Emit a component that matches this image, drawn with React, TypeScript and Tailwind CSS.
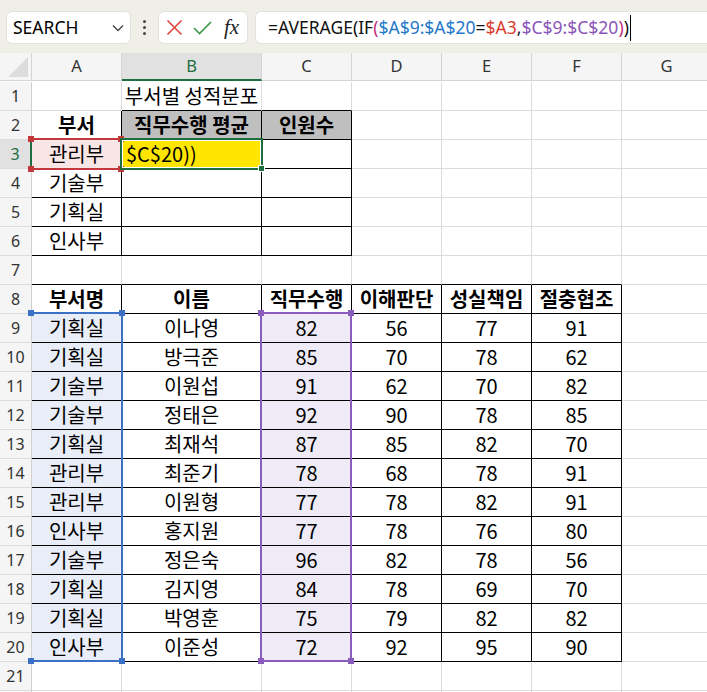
import React from 'react';

const CELL_FONT = { fontFamily: '"Noto Sans CJK KR", "Noto Sans", sans-serif' };
const UI_FONT = { fontFamily: '"Noto Sans", "Noto Sans CJK KR", sans-serif' };

const colLetters = ['A', 'B', 'C', 'D', 'E', 'F', 'G'];

const lower: string[][] = [
  ['기획실', '이나영', '82', '56', '77', '91'],
  ['기획실', '방극준', '85', '70', '78', '62'],
  ['기술부', '이원섭', '91', '62', '70', '82'],
  ['기술부', '정태은', '92', '90', '78', '85'],
  ['기획실', '최재석', '87', '85', '82', '70'],
  ['관리부', '최준기', '78', '68', '78', '91'],
  ['관리부', '이원형', '77', '78', '82', '91'],
  ['인사부', '홍지원', '77', '78', '76', '80'],
  ['기술부', '정은숙', '96', '82', '78', '56'],
  ['기획실', '김지영', '84', '78', '69', '70'],
  ['기획실', '박영훈', '75', '79', '82', '82'],
  ['인사부', '이준성', '72', '92', '95', '90'],
];

function cellValue(r: number, c: number): string {
  if (r === 1 && c === 1) return '부서별 성적분포';
  if (r === 2) return ['부서', '직무수행 평균', '인원수'][c] ?? '';
  if (r >= 3 && r <= 6 && c === 0) return ['관리부', '기술부', '기획실', '인사부'][r - 3];
  if (r === 3 && c === 1) return '$C$20))';
  if (r === 8) return ['부서명', '이름', '직무수행', '이해판단', '성실책임', '절충협조'][c] ?? '';
  if (r >= 9 && r <= 20) return lower[r - 9][c] ?? '';
  return '';
}

function rightBlack(r: number, c: number) {
  if (r >= 2 && r <= 6 && c <= 2) return true;
  if (r >= 8 && r <= 20 && c <= 5) return true;
  return false;
}

function bottomBlack(r: number, c: number) {
  if (r === 1 && (c === 1 || c === 2)) return true;
  if (r >= 2 && r <= 6 && c <= 2) return true;
  if (r >= 7 && r <= 20 && c <= 5) return true;
  return false;
}

function cellBg(r: number, c: number) {
  if (r === 2 && (c === 1 || c === 2)) return 'bg-[#bfbfbf]';
  if (r === 3 && c === 0) return 'bg-[#f8e5e5]';
  if (r === 3 && c === 1) return 'bg-[#ffe500]';
  if (r >= 9 && r <= 20 && c === 0) return 'bg-[#e8edf7]';
  if (r >= 9 && r <= 20 && c === 2) return 'bg-[#eeebf6]';
  return 'bg-white';
}

function Handles({ color }: { color: string }) {
  return (
    <>
      <span className={`absolute -left-[4px] -top-[4px] h-[6px] w-[6px] ${color}`} />
      <span className={`absolute -right-[4px] -top-[4px] h-[6px] w-[6px] ${color}`} />
      <span className={`absolute -left-[4px] -bottom-[4px] h-[6px] w-[6px] ${color}`} />
      <span className={`absolute -right-[4px] -bottom-[4px] h-[6px] w-[6px] ${color}`} />
    </>
  );
}

function FormulaBar() {
  return (
    <div className="flex h-[53px] items-start gap-0 bg-[#efefe7] pt-[11px]">
      <div className="ml-[6px] flex h-[33px] w-[125px] items-center justify-between rounded-md border border-[#e3e3dc] bg-white pl-[6px] pr-[6px]">
        <span className="text-[17.5px] text-black" style={UI_FONT}>SEARCH</span>
        <svg width="12" height="8" viewBox="0 0 12 8" fill="none" stroke="#444" strokeWidth="1.3">
          <path d="M1 1.5 L6 6.5 L11 1.5" />
        </svg>
      </div>
      <div className="flex h-[33px] w-[27px] flex-col items-center justify-center gap-[3px]">
        <span className="h-[3px] w-[3px] rounded-full bg-[#444]" />
        <span className="h-[3px] w-[3px] rounded-full bg-[#444]" />
        <span className="h-[3px] w-[3px] rounded-full bg-[#444]" />
      </div>
      <div className="flex h-[33px] w-[90px] items-center rounded-md border border-[#e3e3dc] bg-white pl-[7px]">
        <svg width="17" height="17" viewBox="0 0 17 17" stroke="#e2453e" strokeWidth="1.6" fill="none">
          <path d="M1.5 1.5 L15.5 15.5 M15.5 1.5 L1.5 15.5" />
        </svg>
        <svg className="ml-[10px]" width="19" height="14" viewBox="0 0 19 14" stroke="#3a9a4a" strokeWidth="1.6" fill="none">
          <path d="M1 7 L6.5 12.5 L18 1" />
        </svg>
        <span className="ml-[12px] text-[21px] italic leading-none text-[#222]" style={{ fontFamily: '"Liberation Serif", serif' }}>fx</span>
      </div>
      <div className="ml-[7px] flex h-[33px] flex-1 items-center rounded-l-md border border-r-0 border-[#e3e3dc] bg-white pl-[12px]" style={UI_FONT}>
        <span className="text-[17.5px] text-[#111]">
          =AVERAGE(IF<span className="text-[#c0307a]">(</span>
          <span className="text-[#1f78c8]">$A$9:$A$20</span>=
          <span className="text-[#d93a2b]">$A3</span>,
          <span className="text-[#8a55b8]">$C$9:$C$20</span>
          <span className="text-[#c0307a]">)</span>)
        </span>
        <span className="ml-[1px] h-[26px] w-[1.5px] bg-black" />
      </div>
    </div>
  );
}

export default function App() {
  const rows = Array.from({ length: 22 }, (_, i) => i + 1);
  return (
    <div className="h-[692px] w-[707px] overflow-hidden bg-white">
      <FormulaBar />
      <div className="relative grid grid-cols-[32px_90px_140px_90px_90px_90px_90px_90px] auto-rows-[29px]" style={CELL_FONT}>
        {/* column headers */}
        <div className="relative h-[28px] border-b border-r border-[#d4d4d4] bg-[#f5f5f5]">
          <svg className="absolute bottom-[3px] right-[3px]" width="20" height="20" viewBox="0 0 20 20">
            <path d="M20 0 L20 20 L0 20 Z" fill="#dcdcdc" />
          </svg>
        </div>
        {colLetters.map((l) => (
          <div
            key={l}
            className={`flex h-[28px] items-center justify-center border-r border-[#d4d4d4] text-[16.5px] ${
              l === 'B' ? 'border-b-2 border-b-[#1e6e42] bg-[#e1e1e1] text-[#1e6e42]' : 'border-b bg-[#f5f5f5] text-[#333]'
            }`}
            style={UI_FONT}
          >
            {l}
          </div>
        ))}

        {rows.map((r) => (
          <React.Fragment key={r}>
            <div
              className={`flex items-center justify-center border-b border-[#dcdcdc] text-[16px] ${
                r === 3 ? 'border-r-2 border-r-[#1e6e42] bg-[#e1e1e1] text-[#1e6e42]' : 'border-r border-r-[#d0d0d0] bg-[#f5f5f5] text-[#333]'
              }`}
              style={UI_FONT}
            >
              {r <= 21 ? r : ''}
            </div>
            {colLetters.map((_, c) => {
              const v = cellValue(r, c);
              const bold = r === 2 || r === 8;
              const left = r === 3 && c === 1;
              return (
                <div
                  key={c}
                  className={`flex items-center overflow-visible whitespace-nowrap border-b border-r text-[20px] text-black ${
                    rightBlack(r, c) ? 'border-r-black' : 'border-r-[#dcdcdc]'
                  } ${bottomBlack(r, c) ? 'border-b-black' : 'border-b-[#dcdcdc]'} ${cellBg(r, c)} ${
                    bold ? 'font-bold' : ''
                  } ${left ? 'justify-start pl-[4px]' : 'justify-center'}`}
                >
                  {v}
                </div>
              );
            })}
          </React.Fragment>
        ))}

        {/* A3 reference (red) */}
        <div className="pointer-events-none absolute left-[32px] top-[85px] h-[32px] w-[90px] border-y-2 border-r-2 border-[#c3393b]">
          <Handles color="bg-[#c3393b]" />
        </div>
        {/* active cell B3 */}
        <div className="pointer-events-none absolute left-[120px] top-[85px] h-[32px] w-[143px] border-2 border-[#1e6e42]">
          <div className="h-full w-full border border-white" />
          <span className="absolute -bottom-[4px] -right-[4px] h-[7px] w-[7px] border border-white bg-[#1e6e42]" />
        </div>
        {/* A9:A20 (blue) */}
        <div className="pointer-events-none absolute left-[32px] top-[259px] h-[350px] w-[91px] border-y-2 border-r-2 border-[#3a70c6]">
          <Handles color="bg-[#3a70c6]" />
        </div>
        {/* C9:C20 (purple) */}
        <div className="pointer-events-none absolute left-[260px] top-[259px] h-[350px] w-[92px] border-2 border-[#8a5cbd]">
          <Handles color="bg-[#8a5cbd]" />
        </div>
      </div>
    </div>
  );
}
